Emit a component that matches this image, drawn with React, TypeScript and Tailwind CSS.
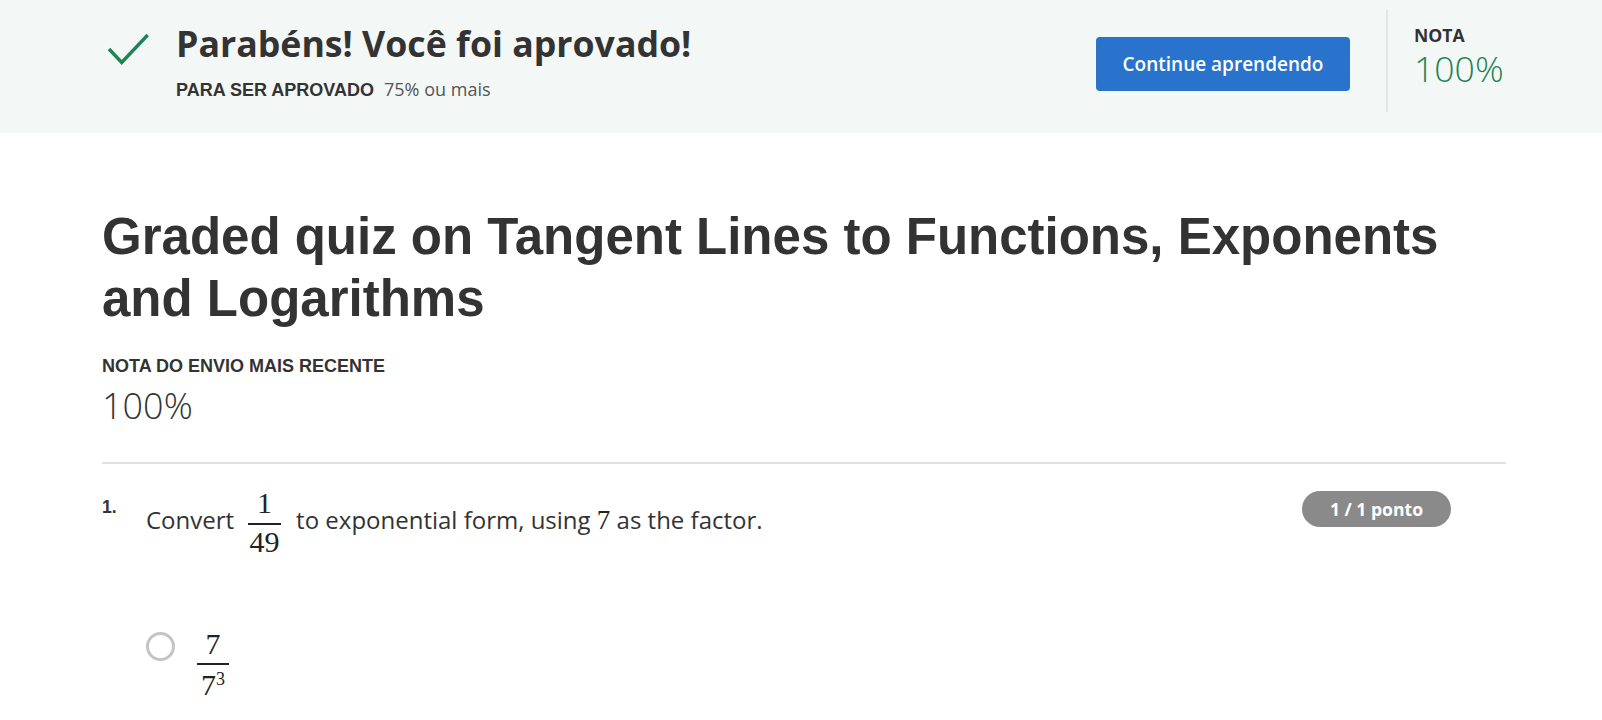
import React from 'react';

const sans = "font-['Open_Sans',sans-serif]";
const arial = "font-['Liberation_Sans',Arial,sans-serif]";
const serif = "font-['Liberation_Serif','Times_New_Roman',serif]";

function CheckIcon() {
  return (
    <svg width="44" height="34" viewBox="0 0 44 34" fill="none">
      <polyline points="2,17 14.7,30.5 40.7,3" stroke="#1f8354" strokeWidth="3.4" strokeLinecap="butt" />
    </svg>
  );
}

function PassBanner() {
  return (
    <div className="flex h-[133px] bg-[#f3f8f6]">
      <div className="ml-[107px] mt-[32px]">
        <CheckIcon />
      </div>
      <div className="ml-[25px] mt-[21px]">
        <h2 className={`${sans} text-[35.7px] font-bold leading-[44px] text-[#333]`}>
          Parabéns! Você foi aprovado!
        </h2>
        <p className="mt-[12px] leading-[24px] text-[#333]">
          <span className={`${arial} text-[18px] font-bold`}>PARA SER APROVADO</span>
          <span className={`${sans} ml-[10px] text-[18px] text-[#555]`}>75% ou mais</span>
        </p>
      </div>
      <div className="ml-auto mr-[96px] flex items-start">
        <button
          type="button"
          className={`${sans} mt-[37px] h-[54px] w-[254px] rounded-[4px] bg-[#2a73cc] text-[19px] font-semibold text-white`}
        >
          Continue aprendendo
        </button>
        <div className="ml-[36px] mt-[10px] h-[102px] w-[2px] bg-[#e3e6e5]" />
        <div className={`${sans} ml-[26px] mt-[23px] w-[92px]`}>
          <div className="text-[17.6px] font-bold leading-[24px] text-[#333]">NOTA</div>
          <div className="text-[35.6px] font-light leading-[42px] text-[#1f8354]">100%</div>
        </div>
      </div>
    </div>
  );
}

function Question() {
  return (
    <div className="mt-[27px] flex items-start">
      <span className={`${arial} mt-[4px] w-[44px] shrink-0 text-[17.6px] font-bold leading-[24px] text-[#333]`}>
        1.
      </span>
      <div className="mt-[-3px] flex-1">
        <div className={`${sans} flex items-center text-[24px] text-[#333]`}>
          <span className="mb-[4px] leading-[32px]">Convert</span>
          <span className={`${serif} ml-[14px] mr-[15px] inline-flex flex-col items-center text-[30px] text-[#222]`}>
            <span className="leading-[30px]">1</span>
            <span className="mt-[5px] h-[1.5px] w-[33px] bg-[#222]" />
            <span className="mt-[2px] leading-[30px]">49</span>
          </span>
          <span className="mb-[4px] leading-[32px]">
            to exponential form, using <span className={`${serif} text-[27px] leading-none text-[#222]`}>7</span> as
            the factor.
          </span>
        </div>

        <div className="mt-[70px] flex items-start">
          <span className="mt-[5px] h-[29px] w-[29px] shrink-0 rounded-full border-[3px] border-[#c4c4c4]" />
          <span className={`${serif} ml-[22px] inline-flex flex-col items-center text-[30px] text-[#222]`}>
            <span className="leading-[34px]">7</span>
            <span className="mt-[2px] h-[2px] w-[32px] bg-[#222]" />
            <span className="mt-[3px] leading-[34px]">
              7<sup className="relative top-[-10px] text-[18px]">3</sup>
            </span>
          </span>
        </div>
      </div>
      <span
        className={`${sans} mr-[55px] flex h-[36px] w-[149px] shrink-0 items-center justify-center rounded-full bg-[#8a8a8a] text-[17.6px] font-bold text-white`}
      >
        1 / 1 ponto
      </span>
    </div>
  );
}

export default function App() {
  return (
    <div className="min-h-[720px] bg-white">
      <PassBanner />
      <main className="ml-[102px] w-[1404px]">
        <h1 className={`${arial} mt-[73px] text-[51px] font-bold leading-[62px] text-[#333]`}>
          Graded quiz on Tangent Lines to Functions, Exponents and Logarithms
        </h1>
        <div className={`${arial} mt-[24px] text-[18px] font-bold leading-[24px] text-[#333]`}>
          NOTA DO ENVIO MAIS RECENTE
        </div>
        <div className={`${sans} mt-[7px] text-[36px] font-light leading-[42px] text-[#333]`}>100%</div>
        <hr className="mt-[35px] border-t-2 border-[#e1e1e1]" />
        <Question />
      </main>
    </div>
  );
}
